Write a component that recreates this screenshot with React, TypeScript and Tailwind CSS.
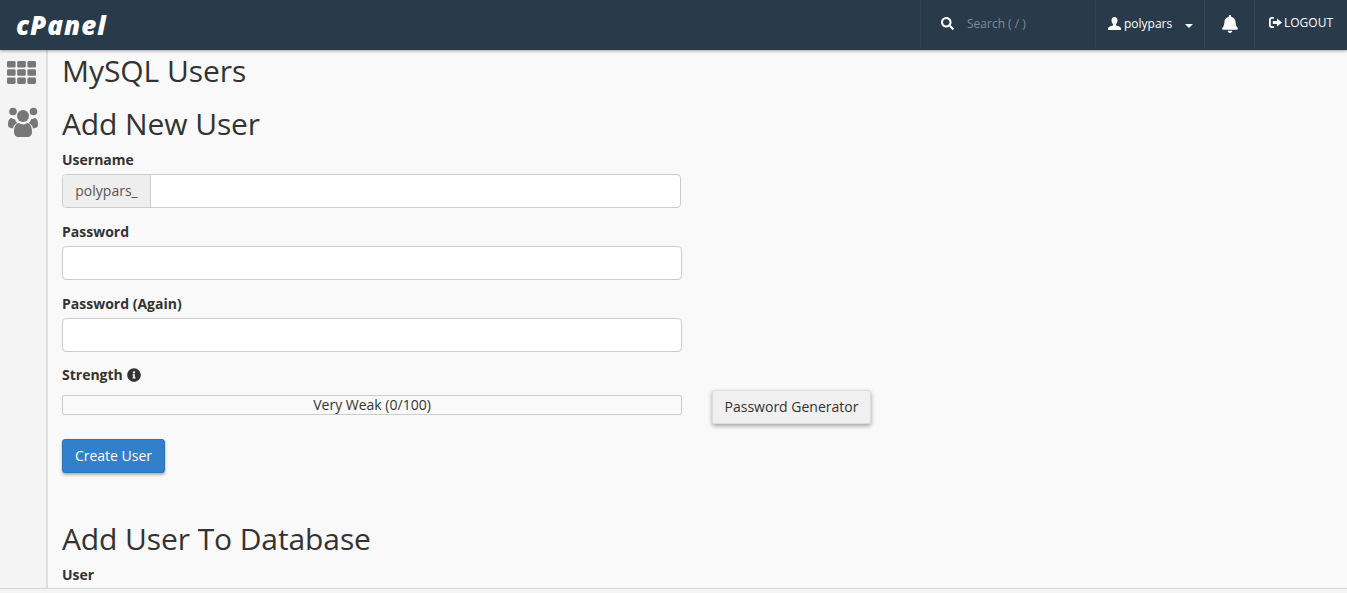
import { FaBell, FaInfoCircle, FaSearch } from "react-icons/fa";

function Label({ children }: { children: React.ReactNode }) {
  return <label className="block h-[20px] text-[14px] leading-[20px] font-bold text-[#333]">{children}</label>;
}

function TextInput() {
  return <input type="text" className="block h-[34px] w-[620px] rounded-[4px] border border-[#ccc] bg-white" />;
}

function GridIcon() {
  const cells = [0, 1, 2, 3, 4, 5, 6, 7, 8];
  return (
    <svg viewBox="0 0 29 23" className="mt-[11px] ml-[2px] h-[23px] w-[29px]" fill="currentColor">
      {cells.map((i) => (
        <rect key={i} x={(i % 3) * 10.2} y={Math.floor(i / 3) * 8.2} width="8.6" height="6.6" rx="1.4" />
      ))}
    </svg>
  );
}

function GroupIcon() {
  return (
    <svg viewBox="0 0 30 30" className="mt-[23px] ml-[3px] h-[30px] w-[30px]" fill="currentColor">
      <circle cx="5" cy="4.5" r="3.8" />
      <circle cx="25.5" cy="4.5" r="3.8" />
      <circle cx="15" cy="9" r="6" />
      <path d="M0 18c0-5 1.500-7 3.500-7 1 .8 2.200 1.200 3.500 1.200.4 1.800 1.300 3 2.400 3.800C6.800 17 5.200 19 5 21.500 2 21 0 20.200 0 18z" />
      <path d="M30 18c0-5-1.500-7-3.500-7-1 .8-2.200 1.200-3.500 1.200-.4 1.800-1.300 3-2.400 3.800 2.600 1 4.200 3 4.400 5.500 3-.5 5-1.300 5-3.500z" />
      <path d="M6 25c0-5.500 2-9 5-9 1 .9 2.400 1.400 4 1.400s3-.5 4-1.400c3 0 5 3.500 5 9 0 3-2 5-4.500 5h-9C8 30 6 28 6 25z" />
    </svg>
  );
}

function UserGlyph() {
  return (
    <svg viewBox="0 0 13 13" className="mr-[3px] h-[13px] w-[13px]" fill="currentColor">
      <path d="M6.500 0C8.300 0 9.500 1.400 9.500 3.400c0 1.500-.7 2.900-1.500 3.600v1.200c.5.500 5 1.300 5 3.300V13H0v-1.500c0-2 4.500-2.800 5-3.300V7C4.200 6.300 3.500 4.900 3.500 3.400 3.500 1.400 4.700 0 6.500 0z" />
    </svg>
  );
}

function LogoutGlyph() {
  return (
    <svg viewBox="0 0 13 11" className="mr-[2px] h-[11px] w-[13px]" fill="currentColor">
      <path d="M5 0v1.800H3c-.7 0-1.200.5-1.200 1.200v5c0 .7.500 1.200 1.200 1.200h2V11H2.800C1.200 11 0 9.800 0 8.200V2.800C0 1.200 1.200 0 2.800 0z" />
      <path d="M8 1.500 13 5.500 8 9.500V7H3.800V4H8z" />
    </svg>
  );
}

export default function App() {
  return (
    <div className="flex h-[593px] w-[1347px] flex-col overflow-hidden bg-[#f9f9f9] font-['Open_Sans',sans-serif] text-[#333]">
      {/* Top bar */}
      <header className="relative z-10 flex h-[50px] shrink-0 items-center justify-between bg-[#293a4a] shadow-[0_1px_3px_rgba(0,0,0,0.35)]">
        <span className="ml-[16px] text-[26px] leading-none font-extrabold tracking-[1px] text-white italic">
          cPanel
        </span>
        <div className="flex h-full items-center pb-[2px] text-white">
          <div className="flex h-[50px] w-[175px] items-center border-l border-[#32465a] pb-[1px] pl-[20px]">
            <FaSearch className="h-[13px] w-[13px]" />
            <span className="ml-[13px] text-[12px] text-[#7f8c99]">Search ( / )</span>
          </div>
          <div className="flex h-[50px] w-[109px] items-center border-l border-[#32465a] pb-[1px] pl-[12px] text-[12px]">
            <UserGlyph />
            <span>polypars</span>
            <span className="mt-[4px] ml-[13px] border-x-[4px] border-t-[4px] border-x-transparent border-t-white" />
          </div>
          <div className="flex h-[50px] w-[50px] items-center justify-center border-l border-[#32465a]">
            <FaBell className="h-[18px] w-[18px]" />
          </div>
          <div className="flex h-[50px] w-[93px] items-center border-l border-[#32465a] pb-[3px] pl-[14px] text-[12px]">
            <LogoutGlyph />
            <span>LOGOUT</span>
          </div>
        </div>
      </header>

      <div className="flex min-h-0 flex-1">
        {/* Side nav */}
        <nav className="flex w-[48px] shrink-0 flex-col items-start border-r-[2px] border-[#dedede] bg-[#f4f4f4] pl-[5px] text-[#777]">
          <GridIcon />
          <GroupIcon />
        </nav>

        {/* Content */}
        <main className="min-w-0 flex-1 pl-[14px]">
          <h1 className="mt-[3px] h-[36px] text-[30px] leading-[36px] font-normal tracking-[-0.05px]">MySQL Users</h1>
          <h2 className="mt-[17px] h-[36px] text-[30px] leading-[36px] font-normal tracking-[-0.1px]">Add New User</h2>

          <div className="mt-[8px]">
            <Label>Username</Label>
            <div className="mt-[4px] flex h-[34px] w-[619px] rounded-[4px] border border-[#ccc] bg-white">
              <span className="flex w-[88px] items-center justify-center rounded-l-[4px] border-r border-[#ccc] bg-[#eee] pb-[2px] text-[14px] text-[#555]">
                polypars_
              </span>
            </div>
          </div>

          <div className="mt-[14px]">
            <Label>Password</Label>
            <div className="mt-[4px]">
              <TextInput />
            </div>
          </div>

          <div className="mt-[14px]">
            <Label>Password (Again)</Label>
            <div className="mt-[4px]">
              <TextInput />
            </div>
          </div>

          <div className="mt-[13px] flex items-center gap-[4px]">
            <Label>Strength</Label>
            <FaInfoCircle className="h-[14px] w-[14px] text-[#333]" />
          </div>

          <div className="mt-[5px] flex items-start">
            <div className="mt-[5px] flex h-[20px] w-[620px] items-center justify-center rounded-[2px] border border-[#ccc] bg-[#fafafa] text-[14px] leading-none">
              Very Weak (0/100)
            </div>
            <button className="ml-[30px] h-[34px] w-[159px] rounded-[2px] border border-[#ddd] bg-[#f0f0f0] pb-[1px] text-[14px] text-[#333] shadow-[0_2px_4px_rgba(0,0,0,0.35)]">
              Password Generator
            </button>
          </div>

          <button className="mt-[15px] block h-[34px] w-[103px] rounded-[3px] border border-[#2b74b6] bg-[#3180c9] pb-[2px] text-[14px] text-white shadow-[0_2px_3px_rgba(0,0,0,0.3)]">
            Create User
          </button>

          <h2 className="mt-[48px] h-[36px] text-[30px] leading-[36px] font-normal tracking-[-0.1px]">Add User To Database</h2>
          <div className="mt-[8px]">
            <Label>User</Label>
          </div>
        </main>
      </div>

      <div className="h-[5px] shrink-0 border-t border-[#d6d6d6] bg-[#f4f4f4]" />
    </div>
  );
}
